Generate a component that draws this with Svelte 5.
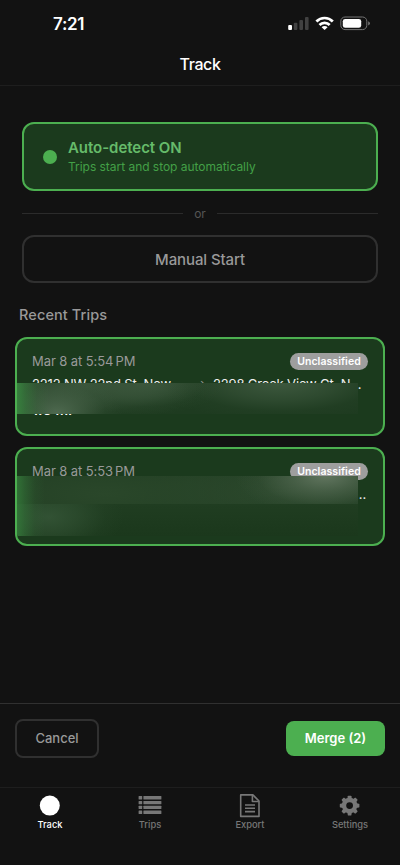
<script lang="ts">
  interface Trip {
    date: string;
    from: string;
    to: string;
    distance: string;
    masks: string[];
  }

  const trips: Trip[] = [
    {
      date: "Mar 8 at 5:54",
      from: "2212 NW 22nd St, New…",
      to: "2298 Creek View Ct, N…",
      distance: "1.5 mi",
      masks: ["mask-single"],
    },
    {
      date: "Mar 8 at 5:53",
      from: "",
      to: "..",
      distance: "",
      masks: ["mask-upper", "mask-lower"],
    },
  ];

  const tabs = ["Track", "Trips", "Export", "Settings"];
  let active = $state("Track");
  const teeth = [0, 45, 90, 135, 180, 225, 270, 315];
</script>

<div class="screen">
  <div class="status-bar">
    <span class="time">7:21</span>
    <svg class="status-icons" width="84" height="16" viewBox="0 0 84 16">
      <rect x="0.2" y="9" width="3.8" height="5" rx="1" fill="#fff" />
      <rect x="5.8" y="6.8" width="3.6" height="7.2" rx="1" fill="#414141" />
      <rect x="11.4" y="4" width="3.6" height="10" rx="1" fill="#414141" />
      <rect x="17" y="1" width="3.6" height="13" rx="1" fill="#414141" />
      <g fill="none" stroke="#fff" stroke-width="2.7">
        <path d="M28.4 5.5 A11.4 11.4 0 0 1 44.8 5.5" />
        <path d="M31.5 9 A7 7 0 0 1 41.7 9" />
      </g>
      <path d="M36.6 14 L33.6 11.2 A4.2 4.2 0 0 1 39.6 11.2 Z" fill="#fff" />
      <rect x="52.8" y="1" width="26" height="12.6" rx="4.2" fill="none" stroke="#747474" />
      <rect x="54.8" y="2.9" width="18.4" height="8.9" rx="2.4" fill="#fff" />
      <path d="M80.2 5.2 Q82 6 82 7.3 Q82 8.6 80.2 9.4 Z" fill="#747474" />
    </svg>
  </div>

  <header class="header"><h1>Track</h1></header>

  <main class="content">
    <div class="auto-card">
      <span class="dot"></span>
      <div>
        <div class="auto-title">Auto-detect ON</div>
        <div class="auto-hint">Trips start and stop automatically</div>
      </div>
    </div>

    <div class="divider"><span>or</span></div>

    <button class="manual">Manual Start</button>

    <h2>Recent Trips</h2>

    {#each trips as trip}
      <article class="trip">
        <div class="trip-top">
          <span class="date">{trip.date}<span class="meridiem">PM</span></span>
          <span class="badge">Unclassified</span>
        </div>
        <div class="route">
          <span class="from">{trip.from}</span>
          <span class="arrow">{trip.from ? "→" : ""}</span>
          <span class="to" class:tail={!trip.from}>{trip.to}</span>
        </div>
        <div class="distance">{trip.distance}</div>
        {#each trip.masks as mask}
          <div class="mask {mask}"></div>
        {/each}
      </article>
    {/each}
  </main>

  <div class="merge-bar">
    <button class="cancel">Cancel</button>
    <button class="merge">Merge (2)</button>
  </div>

  <nav class="tabs">
    {#each tabs as tab}
      <button class="tab" class:active={tab === active} onclick={() => (active = tab)}>
        <svg width="26" height="26" viewBox="0 0 26 26">
          {#if tab === "Track"}
            <circle cx="12.8" cy="12.6" r="10" fill="currentColor" />
          {:else if tab === "Trips"}
            {#each [3.1, 7.9, 12.7, 17.5] as y}
              <rect x="1.6" {y} width="3.6" height="3.4" rx="0.5" fill="currentColor" />
              <rect x="6.4" {y} width="18" height="3.4" rx="0.5" fill="currentColor" />
            {/each}
          {:else if tab === "Export"}
            <g fill="none" stroke="currentColor" stroke-width="1.6" stroke-linejoin="round">
              <path d="M3.7 1.9 H15.9 L22 8 V23.4 H3.7 Z" />
              <path d="M15.4 2.1 V8.5 H21.8" />
              <path d="M8 12 H18 M8 15.3 H18 M8 18.6 H18" />
            </g>
          {:else}
            <g transform="translate(-0.4 -0.4)">
              <circle cx="13" cy="13" r="5.6" fill="none" stroke="currentColor" stroke-width="4.4" />
              {#each teeth as angle}
                <path
                  d="M10.7 6.5 L11.2 3.7 Q11.3 3.2 11.8 3.2 H14.2 Q14.7 3.2 14.8 3.7 L15.3 6.5 Z"
                  transform="rotate({angle} 13 13)"
                  fill="currentColor"
                />
              {/each}
            </g>
          {/if}
        </svg>
        <span>{tab}</span>
      </button>
    {/each}
  </nav>
</div>

<style>
  :global(body) {
    background: #121212;
  }

  .screen {
    width: 400px;
    height: 865px;
    box-sizing: border-box;
    display: flex;
    flex-direction: column;
    overflow: hidden;
    background: #121212;
    color: #fff;
    font-family: Inter, "Liberation Sans", sans-serif;
  }

  button {
    box-sizing: border-box;
    padding: 0;
    border: 0;
    background: none;
    font-family: inherit;
  }

  .status-bar {
    height: 45px;
    display: flex;
    flex-shrink: 0;
    justify-content: space-between;
    align-items: center;
    padding: 2px 28px 0 53px;
    box-sizing: border-box;
  }

  .time {
    font-size: 17px;
    font-weight: 600;
    letter-spacing: -0.3px;
  }

  .header {
    height: 41px;
    flex-shrink: 0;
    box-sizing: border-box;
    border-bottom: 1px solid #1e1e1e;
    text-align: center;
  }

  h1 {
    margin: 0;
    font-size: 16px;
    line-height: 39px;
    font-weight: 500;
    letter-spacing: -0.4px;
  }

  .content {
    flex: 1;
    padding: 36px 15px 0;
  }

  .auto-card {
    height: 69px;
    box-sizing: border-box;
    margin: 0 7px;
    padding: 0 19px;
    display: flex;
    align-items: center;
    gap: 11px;
    border: 2px solid #4caf50;
    border-radius: 12px;
    background: #1b3a1d;
  }

  .dot {
    width: 14px;
    height: 14px;
    border-radius: 50%;
    background: #4caf50;
  }

  .auto-title {
    color: #66bb6a;
    font-size: 15px;
    line-height: 20px;
    font-weight: 600;
    letter-spacing: -0.05px;
  }

  .auto-hint {
    color: #43a047;
    font-size: 12px;
    line-height: 17px;
    letter-spacing: -0.03px;
  }

  .divider {
    display: flex;
    align-items: center;
    gap: 11px;
    height: 44px;
    margin: 0 7px;
    color: #555;
    font-size: 12px;
  }

  .divider::before,
  .divider::after {
    content: "";
    flex: 1;
    height: 1px;
    background: #2b2b2b;
  }

  .manual {
    display: block;
    width: 356px;
    height: 48px;
    margin: 0 7px;
    border: 2px solid #303030;
    border-radius: 12px;
    color: #999;
    font-size: 15px;
    font-weight: 500;
    letter-spacing: -0.1px;
  }

  h2 {
    margin: 21px 4px 12px;
    color: #999;
    font-size: 14.5px;
    line-height: 21px;
    font-weight: 500;
    letter-spacing: 0.1px;
  }

  .trip {
    position: relative;
    height: 98.5px;
    box-sizing: border-box;
    margin-bottom: 11.5px;
    padding: 14px 15px 0;
    border: 2px solid #4caf50;
    border-radius: 12px;
    background: #1b3a1d;
    overflow: hidden;
  }

  .trip-top {
    display: flex;
    justify-content: space-between;
    align-items: flex-start;
    height: 17px;
  }

  .date {
    color: #999;
    font-size: 13px;
    line-height: 16px;
    letter-spacing: -0.08px;
  }

  .meridiem {
    margin-left: 2px;
  }

  .badge {
    width: 78px;
    height: 17px;
    border-radius: 9px;
    background: #9e9e9e;
    color: #fff;
    font-size: 10.5px;
    line-height: 17px;
    font-weight: 600;
    letter-spacing: 0.05px;
    text-align: center;
  }

  .route {
    display: grid;
    grid-template-columns: 163px 18px 1fr;
    margin-top: 5px;
    color: #eee;
    font-size: 13px;
    line-height: 18px;
    letter-spacing: -0.15px;
    white-space: nowrap;
  }

  .arrow {
    font-size: 12px;
    color: #999;
  }

  .tail {
    margin-right: 2px;
    text-align: right;
  }

  .distance {
    margin-top: 8px;
    font-size: 14px;
    line-height: 18px;
    font-weight: 600;
    letter-spacing: 0.2px;
  }

  /* Blurred strips hiding the addresses */
  .mask {
    position: absolute;
    left: -2px;
    width: 343px;
  }

  .mask-single {
    top: 44px;
    height: 31px;
    background:
      linear-gradient(90deg, #398640, #39864080 11px, #39864020 22px, #39864000 34px),
      radial-gradient(ellipse 65px 38px at 42px 30px, #4f6a50, #4f6a5080 40%, #4f6a5018 75%, #4f6a5000),
      radial-gradient(ellipse 125px 40px at 70px 0, #3a553b, #3a553b90 45%, #3a553b20 75%, #3a553b00),
      radial-gradient(ellipse 80px 32px at 130px 0, #3e593f, #3e593f80 45%, #3e593f18 75%, #3e593f00),
      radial-gradient(ellipse 125px 38px at 265px 0, #3d583e, #3d583e80 45%, #3d583e18 75%, #3d583e00),
      #1e3b20;
  }

  .mask-upper {
    top: 27px;
    height: 28px;
    background:
      linear-gradient(90deg, #327638, #32763880 10px, #32763820 20px, #32763800 30px),
      radial-gradient(ellipse 90px 40px at 310px 0, #61755f, #61755f80 38%, #61755f18 75%, #61755f00),
      radial-gradient(ellipse 190px 50px at 90px 18px, #2a472a, #2a472a90 50%, #2a472a00),
      radial-gradient(ellipse 150px 45px at 265px 16px, #2c482d, #2c482d90 50%, #2c482d00),
      #1e3b20;
  }

  .mask-lower {
    top: 55px;
    height: 32px;
    background:
      linear-gradient(90deg, #34783a, #34783a80 10px, #34783a20 20px, #34783a00 30px),
      radial-gradient(ellipse 75px 42px at 34px 13px, #325234, #32523490 40%, #32523420 75%, #32523400),
      linear-gradient(#203d21, #1b381c);
  }

  .merge-bar {
    height: 84px;
    flex-shrink: 0;
    box-sizing: border-box;
    padding: 15px 15px 0;
    display: flex;
    justify-content: space-between;
    align-items: flex-start;
    border-top: 1px solid #303030;
  }

  .cancel {
    width: 84px;
    height: 39px;
    padding-bottom: 1px;
    border: 2px solid #303030;
    border-radius: 8px;
    color: #999;
    font-size: 13px;
    font-weight: 500;
  }

  .merge {
    width: 99px;
    height: 35px;
    margin-top: 2px;
    padding-bottom: 1px;
    border-radius: 8px;
    background: #4caf50;
    color: #fff;
    font-size: 13px;
    font-weight: 600;
  }

  .tabs {
    height: 78px;
    flex-shrink: 0;
    box-sizing: border-box;
    padding-top: 5px;
    display: grid;
    grid-template-columns: repeat(4, 1fr);
    align-items: start;
    border-top: 1px solid #1e1e1e;
  }

  .tab {
    display: flex;
    flex-direction: column;
    align-items: center;
    color: #777;
    font-size: 9.3px;
    line-height: 12px;
    font-weight: 500;
  }

  .tab.active {
    color: #fff;
  }
</style>
